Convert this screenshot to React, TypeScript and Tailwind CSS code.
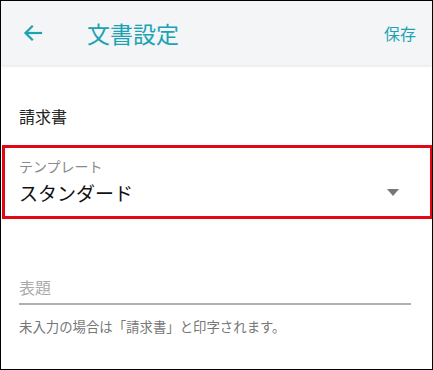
export default function App() {
  return (
    <div
      className="h-[370px] w-[433px] overflow-hidden border border-black bg-white"
      style={{ fontFamily: '"Noto Sans CJK JP", "Noto Sans", sans-serif' }}
    >
      <header className="flex h-[64px] items-center bg-[#f3f5f7] shadow-[0_1px_3px_rgba(0,0,0,0.12)]">
        <button className="ml-[20px] flex h-[24px] w-[24px] items-center justify-center text-[#1ba3b3]">
          <svg width="24" height="24" viewBox="0 0 24 24" fill="none" stroke="currentColor" strokeWidth="2.2" strokeLinecap="square">
            <path d="M20 12H5" />
            <path d="M11 5.5L4.5 12L11 18.5" />
          </svg>
        </button>
        <h1 className="ml-[42px] text-[23px] leading-none text-[#1ba3b3]">文書設定</h1>
        <span className="ml-auto mr-[16px] text-[16px] text-[#1ba3b3]">保存</span>
      </header>

      <div className="px-[18px] pt-[43px] text-[16px] leading-none text-[#222]">請求書</div>

      <div className="mt-[21px] ml-[1px] mr-[-1px] border-[3px] border-[#e30613] px-[14px] pt-[11px] pb-[14px]">
        <div className="text-[14px] leading-none text-[#8a8a8a]">テンプレート</div>
        <div className="mt-[10px] flex items-center">
          <span className="text-[19px] leading-none text-[#111]">スタンダード</span>
          <svg className="ml-auto mr-[17px]" width="12" height="7" viewBox="0 0 12 7">
            <path d="M0 0H12L6 7Z" fill="#777" />
          </svg>
        </div>
      </div>

      <div className="ml-[18px] mr-[21px] mt-[60px]">
        <div className="border-b-2 border-[#b0b0b0] pb-[8px] text-[16px] leading-none text-[#aaa]">表題</div>
        <p className="mt-[15px] text-[13.4px] leading-none text-[#777]">未入力の場合は「請求書」と印字されます。</p>
      </div>
    </div>
  );
}
